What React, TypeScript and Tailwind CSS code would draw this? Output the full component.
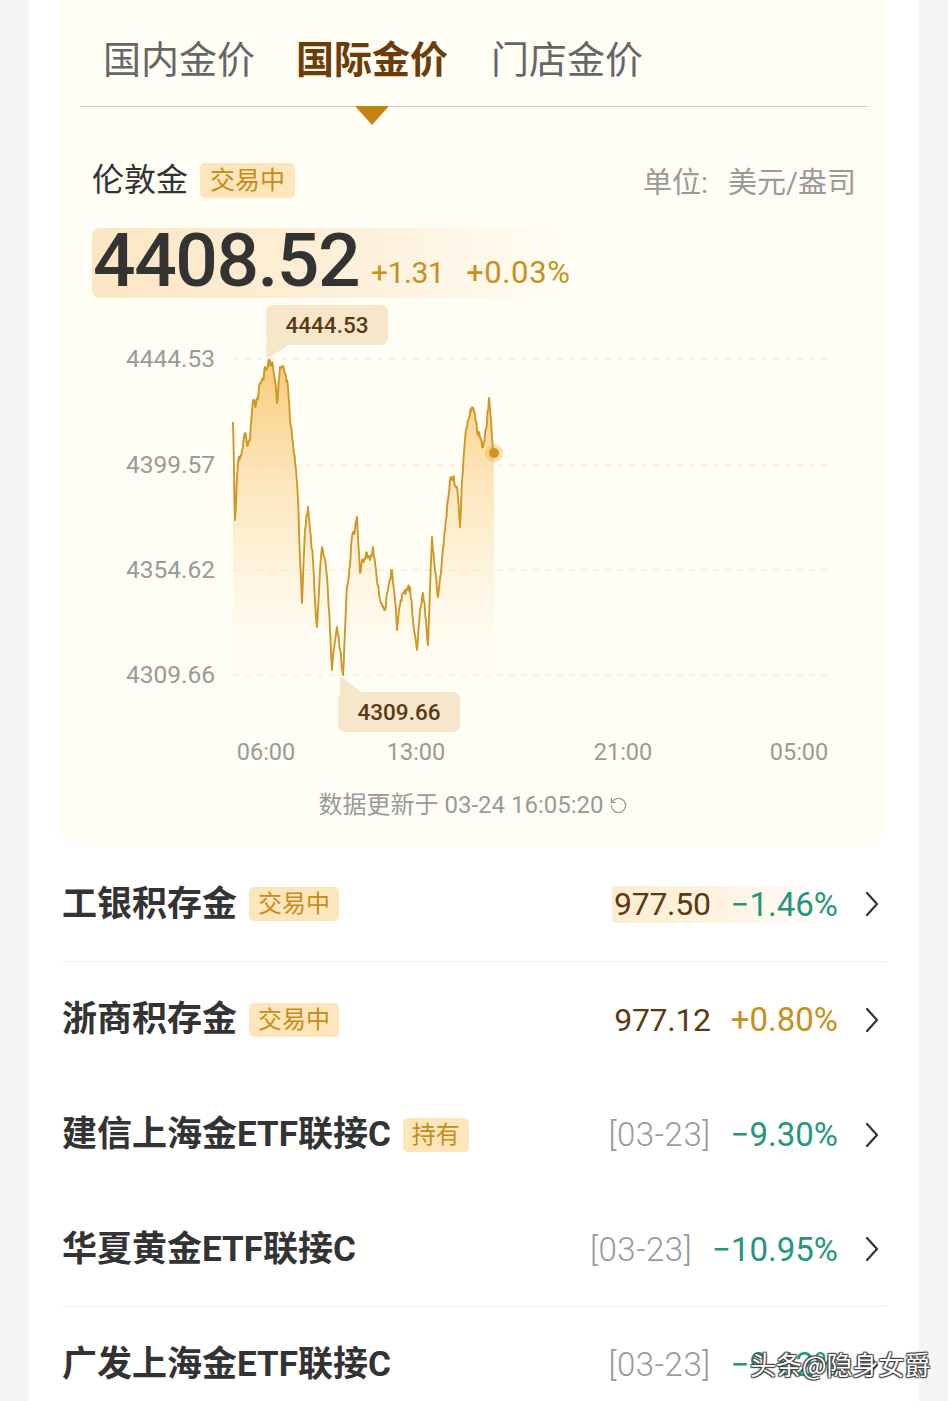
import React from "react";
import { RotateCw } from "lucide-react";

const FONT = { fontFamily: 'Roboto, "Noto Sans CJK SC", "Noto Sans", sans-serif' };

const KEY: [number, number][] = [
  [233, 422], [235, 520], [238, 463], [242, 450], [245, 433], [248, 445], [250, 440], [253, 400],
  [256, 405], [260, 383], [263, 380], [265, 367], [268, 364], [270, 361], [273, 367], [275, 380],
  [277, 403], [280, 367], [283, 366], [285, 373], [288, 387], [290, 420], [293, 443], [296, 470],
  [298, 500], [300, 560], [302, 603], [305, 530], [308, 507], [310, 530], [313, 560], [315, 600],
  [317, 627], [320, 570], [322, 547], [325, 560], [327, 577], [330, 630], [332, 670], [335, 640],
  [337, 627], [340, 650], [343, 675], [345, 630], [347, 587], [350, 565], [352, 537], [355, 530],
  [357, 517], [360, 573], [363, 560], [367, 553], [370, 560], [373, 547], [376, 570], [380, 600],
  [385, 610], [388, 590], [392, 570], [395, 600], [397, 630], [400, 605], [403, 593], [407, 590],
  [410, 587], [413, 620], [417, 650], [420, 610], [423, 593], [426, 620], [428, 645], [430, 590],
  [432, 537], [435, 570], [438, 597], [442, 560], [445, 530], [448, 500], [450, 480], [453, 478],
  [457, 487], [460, 527], [462, 480], [465, 440], [468, 420], [472, 407], [475, 415], [477, 430],
  [480, 438], [483, 447], [486, 430], [489, 398], [491, 420], [493, 450], [494, 453],
];

function buildPaths() {
  let s = 12345;
  const rnd = () => {
    s = (s * 16807) % 2147483647;
    return s / 2147483647;
  };
  const pts: [number, number][] = [];
  for (let k = 0; k < KEY.length - 1; k++) {
    const [ax, ay] = KEY[k];
    const [bx, by] = KEY[k + 1];
    const steps = Math.max(1, Math.round((bx - ax) / 0.8));
    for (let i = 0; i < steps; i++) {
      const t = i / steps;
      let y = ay + (by - ay) * t;
      if (i > 0) y += (rnd() - 0.5) * 8;
      y = Math.min(676, Math.max(359, y));
      pts.push([ax + (bx - ax) * t, y]);
    }
  }
  pts.push(KEY[KEY.length - 1]);
  const line = pts.map((p, i) => `${i === 0 ? "M" : "L"}${p[0].toFixed(1)} ${p[1].toFixed(1)}`).join(" ");
  const fill = `${line} L494 680 L233 680 Z`;
  return { line, fill };
}

const { line, fill } = buildPaths();

function Chart() {
  const grid = [359, 465, 570, 675];
  const ylabels = ["4444.53", "4399.57", "4354.62", "4309.66"];
  const xlabels: [string, number][] = [["06:00", 266], ["13:00", 416], ["21:00", 623], ["05:00", 799]];
  return (
    <svg width={828} height={475} viewBox="60 298 828 475" className="block" style={FONT}>
      <defs>
        <linearGradient id="gfill" gradientUnits="userSpaceOnUse" x1="0" y1="360" x2="0" y2="680">
          <stop offset="0" stopColor="#f8c263" stopOpacity="0.85" />
          <stop offset="0.55" stopColor="#fbd99a" stopOpacity="0.4" />
          <stop offset="1" stopColor="#fff3dc" stopOpacity="0" />
        </linearGradient>
      </defs>
      {grid.map((y) => (
        <line key={y} x1={233} x2={830} y1={y} y2={y} stroke="#ebe8e0" strokeWidth={1} strokeDasharray="6 6" />
      ))}
      {ylabels.map((t, i) => (
        <text key={t} x={215} y={grid[i] + 8} textAnchor="end" fontSize={24.5} fill="#9a9a9a">
          {t}
        </text>
      ))}
      <path d={fill} fill="url(#gfill)" />
      <path d={line} fill="none" stroke="#d09726" strokeWidth={1.9} strokeLinejoin="round" />
      <circle cx={494} cy={453} r={9} fill="#e6a93b" opacity={0.35} />
      <circle cx={494} cy={453} r={5} fill="#d4931d" />
      {/* max tooltip */}
      <polygon points="267,343 292,343 268,358" fill="#f6e6ca" />
      <line x1={267} y1={343} x2={267} y2={358} stroke="#efd9b0" strokeWidth={1} />
      <rect x={266} y={305} width={122} height={40} rx={7} fill="#f6e6ca" />
      <text x={327} y={333} textAnchor="middle" fontSize={22.5} fontWeight={500} fill="#5a3a12">
        4444.53
      </text>
      {/* min tooltip */}
      <polygon points="340,676 340,694 364,694" fill="#f6e6ca" />
      <rect x={338} y={692} width={122} height={40} rx={7} fill="#f6e6ca" />
      <text x={399} y={720} textAnchor="middle" fontSize={22.5} fontWeight={500} fill="#5a3a12">
        4309.66
      </text>
      {xlabels.map(([t, x]) => (
        <text key={t} x={x} y={760} textAnchor="middle" fontSize={23.5} fill="#9a9a9a">
          {t}
        </text>
      ))}
    </svg>
  );
}

function Badge({ children, big }: { children: React.ReactNode; big?: boolean }) {
  return (
    <span
      className={`ml-[12px] inline-flex items-center rounded-[5px] bg-[#fde6bb] leading-none text-[#c78b16] ${
        big ? "h-[35px] px-[10px] text-[25px]" : "h-[34px] px-[9px] text-[24px]"
      }`}
    >
      {children}
    </span>
  );
}

function Chevron() {
  return (
    <svg width={16} height={28} viewBox="0 0 16 28" className="ml-[26px] mr-[6px] shrink-0">
      <path d="M3 3 L13 14 L3 25" fill="none" stroke="#333" strokeWidth={2.2} strokeLinecap="round" strokeLinejoin="round" />
    </svg>
  );
}

type Row = {
  name: string;
  badge?: string;
  value?: string;
  date?: string;
  pct: string;
  up?: boolean;
  highlight?: boolean;
  divider?: boolean;
};

const rows: Row[] = [
  { name: "工银积存金", badge: "交易中", value: "977.50", pct: "−1.46%", highlight: true, divider: true },
  { name: "浙商积存金", badge: "交易中", value: "977.12", pct: "+0.80%", up: true },
  { name: "建信上海金ETF联接C", badge: "持有", date: "[03-23]", pct: "−9.30%" },
  { name: "华夏黄金ETF联接C", date: "[03-23]", pct: "−10.95%", divider: true },
  { name: "广发上海金ETF联接C", date: "[03-23]", pct: "−9.62%" },
];

function ListRow({ r }: { r: Row }) {
  return (
    <div className={`relative flex h-[115px] items-center ${r.divider ? "border-b border-[#eeeeee]" : ""}`}>
      <div className="flex items-center">
        <span className="text-[35px] font-bold leading-none text-[#333333]">{r.name}</span>
        {r.badge && <Badge>{r.badge}</Badge>}
      </div>
      <div className="ml-auto flex items-center">
        <div
          className={`flex items-center rounded-[4px] py-[2px] pl-[2px] ${
            r.highlight ? "bg-[linear-gradient(90deg,#fdecd0_0%,#fff6e8_60%,rgba(255,255,255,0)_100%)]" : ""
          }`}
        >
          {r.value && <span className="text-[32px] leading-none tracking-[-0.3px] text-[#5b3a10]">{r.value}</span>}
          {r.date && <span className="text-[33px] font-light leading-none tracking-[0.5px] text-[#9a9a9a]">{r.date}</span>}
          <span
            className={`ml-[20px] text-[33px] leading-none ${r.up ? "text-[#c8901c]" : "text-[#23977a]"}`}
          >
            {r.pct}
          </span>
        </div>
        <Chevron />
      </div>
    </div>
  );
}

export default function App() {
  return (
    <div className="h-[1401px] w-[948px] overflow-hidden bg-[#f4f4f4]" style={FONT}>
      <div className="relative ml-[29px] h-full w-[890px] bg-white">
        {/* cream panel */}
        <div className="mx-[31px] h-[847px] rounded-b-[22px] bg-[#fffdf4]">
          {/* tabs */}
          <div className="mx-[20px] flex h-[107px] items-start border-b border-[#d0cdc6] pl-[23px] pt-[38px]">
            <span className="text-[38px] leading-[44px] text-[#666666]">国内金价</span>
            <span className="relative ml-[41px] text-[38px] font-bold leading-[44px] text-[#6b3d08]">
              国际金价
              <span className="absolute left-1/2 top-[68px] h-0 w-0 -translate-x-1/2 border-x-[17px] border-t-[19px] border-x-transparent border-t-[#c4850e]" />
            </span>
            <span className="ml-[43px] text-[38px] leading-[44px] text-[#666666]">门店金价</span>
          </div>
          {/* heading */}
          <div className="mt-[53px] flex h-[40px] items-center px-[32px]">
            <span className="text-[32px] leading-none text-[#333333]">伦敦金</span>
            <Badge big>交易中</Badge>
            <span className="ml-auto mt-[6px] flex text-[29px] leading-none text-[#9a9a9a]">
              <span>单位:</span>
              <span className="ml-[20px]">美元/盎司</span>
            </span>
          </div>
          {/* price */}
          <div className="ml-[32px] mt-[28px] flex h-[70px] w-[470px] items-end rounded-[8px] bg-[linear-gradient(90deg,#fbe6c2_0%,#fdf0d9_55%,rgba(255,253,244,0)_100%)] pb-[6px]">
            <span className="ml-[1px] text-[75px] font-medium leading-[64px] tracking-[-1.5px] text-[#333333]">4408.52</span>
            <span className="mb-[4px] ml-[12px] text-[30px] leading-none tracking-[-0.5px] text-[#c8901c]">+1.31</span>
            <span className="mb-[4px] ml-[22px] text-[31px] leading-none tracking-[0.6px] text-[#c8901c]">+0.03%</span>
          </div>
          {/* chart */}
          <Chart />
          {/* update line */}
          <div className="mt-[17px] flex h-[30px] items-center justify-center pr-[2px] text-[24px] leading-none text-[#9a9a9a]">
            <span>数据更新于 03-24 16:05:20</span>
            <RotateCw size={19} strokeWidth={1.6} className="ml-[5px] -scale-x-100 text-[#9a9a9a]" />
          </div>
        </div>
        {/* list */}
        <div className="mx-[33px]">
          {rows.map((r) => (
            <ListRow key={r.name} r={r} />
          ))}
        </div>
        {/* watermark */}
        <div
          className="absolute left-[721px] top-[1351px] whitespace-nowrap text-[26px] leading-none text-white"
          style={{
            fontFamily: '"Noto Sans CJK SC", sans-serif',
            textShadow: "0 0 1px #333, 1px 1px 1px #444, -1px -1px 1px #444, 1px -1px 1px #444, -1px 1px 1px #444",
          }}
        >
          头条@隐身女爵
        </div>
      </div>
    </div>
  );
}
